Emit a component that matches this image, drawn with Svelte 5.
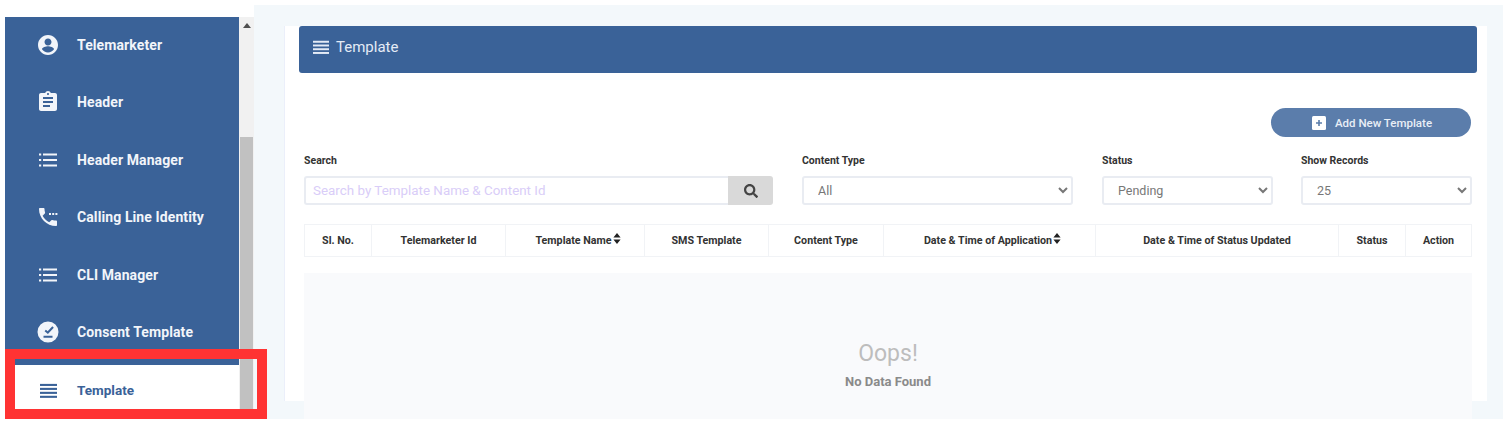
<script lang="ts">
  const menu = [
    { label: 'Telemarketer', icon: 'user' },
    { label: 'Header', icon: 'clipboard' },
    { label: 'Header Manager', icon: 'list' },
    { label: 'Calling Line Identity', icon: 'phone' },
    { label: 'CLI Manager', icon: 'list' },
    { label: 'Consent Template', icon: 'check' }
  ];

  const columns = [
    { label: 'Sl. No.', width: 67 },
    { label: 'Telemarketer Id', width: 134 },
    { label: 'Template Name', width: 139, sort: true },
    { label: 'SMS Template', width: 124 },
    { label: 'Content Type', width: 115 },
    { label: 'Date & Time of Application', width: 212, sort: true },
    { label: 'Date & Time of Status Updated', width: 243 },
    { label: 'Status', width: 67 },
    { label: 'Action', width: 67 }
  ];
</script>

{#snippet bars(size)}
  <svg width={size} height={size} viewBox="0 0 18 18" fill="currentColor">
    <rect x="0" y="2" width="18" height="2.2" />
    <rect x="0" y="6.2" width="18" height="2.2" />
    <rect x="0" y="10.4" width="18" height="2.2" />
    <rect x="0" y="14.6" width="18" height="2.2" />
  </svg>
{/snippet}

<div class="page">
  <aside class="sidebar">
    <nav class="menu">
      {#each menu as item}
        <div class="item">
          <span class="icon">
            {#if item.icon === 'user'}
              <svg width="24" height="24" viewBox="0 0 24 24" fill="currentColor"><path d="M12 2C6.48 2 2 6.48 2 12s4.48 10 10 10 10-4.48 10-10S17.52 2 12 2zm0 3.5c1.93 0 3.5 1.57 3.5 3.5S13.93 12.5 12 12.5 8.500 10.930 8.500 9 10.070 5.500 12 5.500zm0 14c-2.500 0-4.710-1.280-6-3.220.03-1.990 4-3.080 6-3.080s5.970 1.090 6 3.080c-1.290 1.940-3.500 3.220-6 3.220z" /></svg>
            {:else if item.icon === 'clipboard'}
              <svg width="24" height="24" viewBox="0 0 24 24" fill="currentColor"><path d="M19 3h-4.180C14.400 1.840 13.300 1 12 1s-2.400.84-2.820 2H5c-1.100 0-2 .9-2 2v14c0 1.100.9 2 2 2h14c1.100 0 2-.9 2-2V5c0-1.100-.9-2-2-2zm-7 0c.55 0 1 .45 1 1s-.45 1-1 1-1-.45-1-1 .45-1 1-1zm2 14H7v-2h7v2zm3-4H7v-2h10v2zm0-4H7V7h10v2z" /></svg>
            {:else if item.icon === 'list'}
              <svg width="24" height="24" viewBox="0 0 24 24" fill="currentColor"><path d="M3 5.500h2.200v2H3zM7 5.500h14v2H7zM3 11h2.200v2H3zM7 11h14v2H7zM3 16.500h2.200v2H3zM7 16.500h14v2H7z" /></svg>
            {:else if item.icon === 'phone'}
              <svg width="24" height="24" viewBox="0 0 24 24" fill="currentColor"><path d="M20 15.500c-1.250 0-2.450-.2-3.570-.57-.35-.11-.74-.03-1.020.24l-2.200 2.200c-2.830-1.440-5.150-3.750-6.590-6.590l2.200-2.210c.28-.26.36-.65.25-1C8.700 6.450 8.500 5.250 8.500 4c0-.55-.45-1-1-1H4c-.55 0-1 .45-1 1 0 9.390 7.610 17 17 17 .55 0 1-.45 1-1v-3.500c0-.55-.45-1-1-1z" /><path d="M13 8h2v2h-2zM16.200 8h2v2h-2zM19.400 8h2v2h-2z" /></svg>
            {:else}
              <svg width="24" height="24" viewBox="0 0 24 24" fill="currentColor"><path fill-rule="evenodd" d="M12 1.500a10.500 10.500 0 1 0 0 21 10.500 10.500 0 0 0 0-21zM16.300 6.300l1.500 1.400-5.900 6.300-3.300-2.800 1.300-1.500 1.800 1.500zM7.500 15.800h9v1.900h-9z" /></svg>
            {/if}
          </span>
          <span>{item.label}</span>
        </div>
      {/each}
      <div class="item active">
        <span class="icon">{@render bars(17)}</span>
        <span>Template</span>
      </div>
    </nav>
    <div class="scrollbar">
      <span class="arrow"></span>
      <span class="thumb"></span>
    </div>
    <div class="highlight"></div>
  </aside>

  <main class="main">
    <section class="card">
      <header class="title">
        {@render bars(16)}
        <h1>Template</h1>
      </header>

      <div class="actions">
        <button class="add" type="button">
          <svg width="14" height="14" viewBox="0 0 14 14"><rect width="14" height="14" rx="1.500" fill="#fff" /><path d="M4 7h6M7 4v6" stroke="#5b7dab" stroke-width="1.600" /></svg>
          Add New Template
        </button>
      </div>

      <div class="filters">
        <div class="field search">
          <span class="label">Search</span>
          <div class="search-box">
            <input type="text" placeholder="Search by Template Name & Content Id" />
            <span class="search-btn">
              <svg width="14" height="14" viewBox="0 0 512 512" fill="#444"><path d="M505 442.700 405.300 343c-4.500-4.500-10.600-7-17-7H372c27.600-35.300 44-79.700 44-128C416 93.100 322.900 0 208 0S0 93.100 0 208s93.100 208 208 208c48.300 0 92.700-16.400 128-44v16.300c0 6.400 2.500 12.500 7 17l99.700 99.700c9.400 9.400 24.600 9.400 33.900 0l28.300-28.300c9.400-9.400 9.400-24.600.1-34zM208 336c-70.700 0-128-57.200-128-128 0-70.700 57.200-128 128-128 70.700 0 128 57.200 128 128 0 70.700-57.200 128-128 128z" /></svg>
            </span>
          </div>
        </div>
        <div class="field type">
          <span class="label">Content Type</span>
          <select><option>All</option></select>
        </div>
        <div class="field status">
          <span class="label">Status</span>
          <select><option>Pending</option></select>
        </div>
        <div class="field records">
          <span class="label">Show Records</span>
          <select><option>25</option></select>
        </div>
      </div>

      <div class="thead">
        {#each columns as col}
          <div class="th" class:sorted={col.sort} style="width: {col.width}px">
            {col.label}
            {#if col.sort}
              <svg class="sort" width="8" height="11" viewBox="0 0 8 11" fill="#222"><path d="M4 0l3.600 4.400H.4zM4 11L.4 6.600h7.200z" /></svg>
            {/if}
          </div>
        {/each}
      </div>

      <div class="empty">
        <div class="oops">Oops!</div>
        <div class="none">No Data Found</div>
      </div>
    </section>
  </main>
</div>

<style>
  :global(body) {
    background: #fff;
    font-family: Roboto, "Liberation Sans", sans-serif;
  }

  .page {
    display: flex;
    height: 419px;
    overflow: hidden;
    padding-left: 5px;
  }

  .sidebar {
    position: relative;
    display: flex;
    flex: none;
    width: 249px;
    margin-top: 17px;
  }

  .menu {
    width: 234px;
    background: #3a6298;
  }

  .item {
    display: flex;
    align-items: center;
    height: 57.500px;
    padding-left: 31px;
    color: #f2f5fa;
    font-size: 14px;
    font-weight: 700;
    letter-spacing: 0.1px;
  }

  .item:first-child {
    margin-top: -1px;
  }

  .icon {
    display: flex;
    justify-content: center;
    width: 24px;
    margin-right: 17px;
  }

  .active {
    height: 50px;
    margin-top: 4px;
    padding-bottom: 10px;
    background: #fff;
    color: #3a6298;
    font-size: 13.500px;
    letter-spacing: 0;
  }

  .scrollbar {
    display: flex;
    flex-direction: column;
    align-items: center;
    flex: none;
    width: 15px;
    background: #f1f1f1;
  }

  .arrow {
    margin-top: 6px;
    border: 4px solid transparent;
    border-top: 0;
    border-bottom: 5px solid #505050;
  }

  .thumb {
    width: 13px;
    flex: 1;
    margin-top: 109px;
    background: #c1c1c1;
  }

  .highlight {
    position: absolute;
    top: 332px;
    left: 0;
    width: 262px;
    height: 70px;
    box-sizing: border-box;
    border: 10px solid #ff3333;
  }

  .main {
    flex: 1;
    margin-top: 5px;
    padding: 39px 16px 0 30px;
    background: #f3f8fb;
  }

  .card {
    height: 100%;
    padding: 0 10px 0 14px;
    border-left: 1px solid #ebeffa;
    background: #fff;
    box-sizing: border-box;
  }

  .title {
    display: flex;
    align-items: center;
    gap: 7px;
    box-sizing: border-box;
    height: 47px;
    margin-top: -18px;
    padding: 0 0 5px 14px;
    border-radius: 3px;
    background: #3a6298;
    color: #e4ebf6;
    position: relative;
  }

  .title h1 {
    margin: 0;
    font-size: 15px;
    font-weight: 400;
  }

  .actions {
    display: flex;
    justify-content: flex-end;
    margin: 35px 1px 0 0;
    padding-right: 5px;
  }

  .add {
    display: flex;
    align-items: center;
    justify-content: center;
    gap: 9px;
    width: 200px;
    height: 29px;
    padding-left: 8px;
    border: 0;
    border-radius: 15px;
    background: #5b7dab;
    color: #e8eef6;
    font: 500 11.500px Roboto, sans-serif;
  }

  .filters {
    display: flex;
    gap: 29px;
    margin: 17px 5px 0;
  }

  .field {
    display: flex;
    flex-direction: column;
    gap: 8px;
    flex: none;
  }

  .search { width: 469px; }
  .type { width: 271px; }
  .status { width: 171px; }
  .records { width: 171px; margin-left: -1px; }

  .label {
    height: 14px;
    color: #333;
    font-size: 10.500px;
    font-weight: 700;
    line-height: 14px;
  }

  .search-box {
    display: flex;
    height: 29px;
  }

  input,
  select {
    box-sizing: border-box;
    height: 29px;
    border: 2px solid #e9ecf2;
    border-radius: 3px;
    background: #fff;
    font-family: Roboto, sans-serif;
    outline: none;
  }

  input {
    flex: 1;
    min-width: 0;
    padding: 0 7px;
    border-right: 0;
    border-radius: 3px 0 0 3px;
    font-size: 13.400px;
  }

  input::placeholder {
    color: #d9cdf8;
    opacity: 1;
  }

  select {
    width: 100%;
    padding-left: 10px;
    color: #777;
    font-size: 12.500px;
  }

  .search-btn {
    display: flex;
    align-items: center;
    justify-content: center;
    width: 45px;
    border-radius: 0 3px 3px 0;
    background: #d9d9d9;
  }

  .thead {
    display: flex;
    height: 33px;
    margin: 19px 5px 0;
    border: 1px solid #f1f3f6;
    border-width: 1px 0;
    box-sizing: border-box;
  }

  .th {
    display: flex;
    align-items: center;
    justify-content: center;
    gap: 1px;
    box-sizing: border-box;
    flex: none;
    border-left: 1px solid #f1f3f6;
    color: #333;
    font-size: 10.700px;
    font-weight: 700;
  }

  .th:last-child {
    border-right: 1px solid #f1f3f6;
  }

  .sorted {
    padding-left: 6px;
  }

  .sort {
    margin-top: -4px;
  }

  .empty {
    display: flex;
    flex-direction: column;
    align-items: center;
    height: 146px;
    margin: 16px 5px 0;
    padding-top: 67px;
    box-sizing: border-box;
    background: #f9fafc;
  }

  .oops {
    color: #bdbdbd;
    font-size: 23px;
    line-height: 28px;
  }

  .none {
    margin-top: 6px;
    color: #8a8a8a;
    font-size: 13px;
    font-weight: 700;
  }
</style>
